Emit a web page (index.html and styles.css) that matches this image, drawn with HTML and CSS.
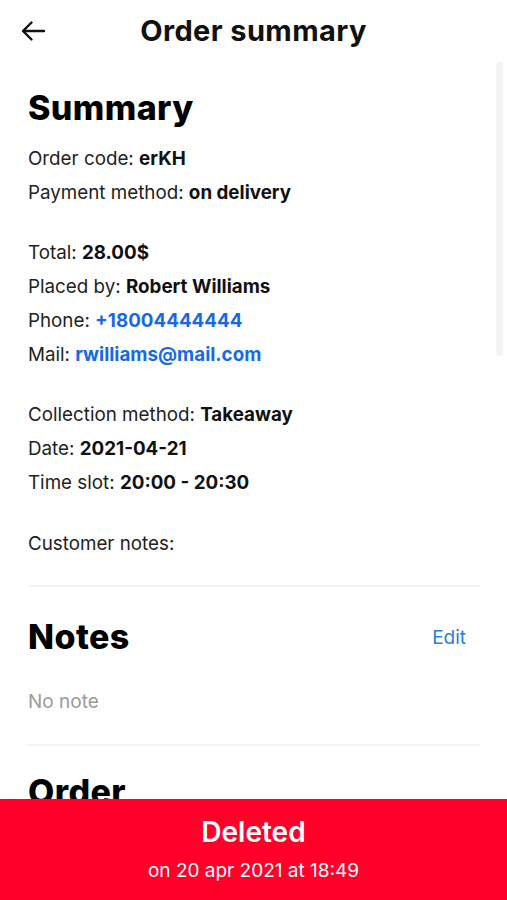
FILE: index.html
```html
<!DOCTYPE html>
<html>
<head>
<meta charset="utf-8">
<link rel="stylesheet" href="styles.css">
</head>
<body>
<div class="screen">
  <header class="topbar">
    <svg class="back" width="26" height="22" viewBox="0 0 26 22"><path d="M24 11H3M11.5 2.5L3 11l8.5 8.5" fill="none" stroke="#111" stroke-width="2.4" stroke-linecap="round" stroke-linejoin="round"/></svg>
    <h1 class="title">Order summary</h1>
  </header>
  <main class="content">
    <section class="section">
      <h2 class="heading">Summary</h2>
      <div class="group">
        <p class="row">Order code: <b>erKH</b></p>
        <p class="row">Payment method: <b>on delivery</b></p>
      </div>
      <div class="group">
        <p class="row">Total: <b>28.00$</b></p>
        <p class="row">Placed by: <b>Robert Williams</b></p>
        <p class="row">Phone: <a class="link">+18004444444</a></p>
        <p class="row">Mail: <a class="link">rwilliams@mail.com</a></p>
      </div>
      <div class="group">
        <p class="row">Collection method: <b>Takeaway</b></p>
        <p class="row">Date: <b>2021-04-21</b></p>
        <p class="row">Time slot: <b>20:00 - 20:30</b></p>
      </div>
      <div class="group last">
        <p class="row">Customer notes:</p>
      </div>
    </section>
    <hr class="divider">
    <section class="section notes">
      <div class="heading-row">
        <h2 class="heading">Notes</h2>
        <a class="edit">Edit</a>
      </div>
      <p class="muted">No note</p>
    </section>
    <hr class="divider">
    <section class="section order">
      <h2 class="heading">Order</h2>
    </section>
  </main>
  <div class="scrollbar"></div>
  <footer class="status">
    <div class="status-title">Deleted</div>
    <div class="status-sub">on 20 apr 2021 at 18:49</div>
  </footer>
</div>
</body>
</html>
```
FILE: styles.css
```css
* { box-sizing: border-box; }
html, body { margin: 0; padding: 0; background: #fff; }
body { font-family: Inter, "Noto Sans", sans-serif; color: #1c1c1c; }
.screen { position: relative; width: 507px; height: 900px; overflow: hidden; background: #fff; }
.topbar { height: 62px; display: flex; align-items: center; position: relative; padding-left: 20px; }
.back { display: block; margin-top: -1px; }
.title { position: absolute; left: 0; right: 0; top: 11px; margin: 0; text-align: center; font-size: 29px; font-weight: 700; letter-spacing: 0.4px; color: #111; line-height: 40px; }
.content { padding: 0 27px 0 28px; }
.heading { margin: 0; font-size: 34px; font-weight: 800; color: #000; line-height: 44px; letter-spacing: 0.4px; }
.section > .heading:first-child { margin-top: 24px; }
.group { margin-top: 26px; }
.group:first-of-type { margin-top: 12px; }
.group.last { margin-top: 27px; }
.row { margin: 0; font-size: 18.8px; line-height: 34px; color: #222; }
.row b { font-weight: 650; color: #111; }
.link { color: #1769e8; font-weight: 650; }
.divider { border: 0; height: 2px; background: #f3f3f3; margin: 24px 0 0; }
.notes { padding-top: 28px; }
.heading-row { display: flex; justify-content: space-between; align-items: center; }
.notes .heading { margin-top: 0; }
.edit { color: #2a7de1; font-size: 19px; margin-right: 14px; }
.muted { margin: 31px 0 0; font-size: 19px; color: #9a9a9a; line-height: 24px; }
.notes + .divider { margin-top: 30px; }
.order .heading { margin-top: 27px; }
.scrollbar { position: absolute; right: 4px; top: 62px; width: 7px; height: 294px; background: #f3f3f3; border-radius: 4px; }
.status { position: absolute; left: 0; right: 0; bottom: 0; height: 101px; background: #ff0029; color: #fff; display: flex; flex-direction: column; align-items: center; padding-top: 15px; }
.status-title { font-size: 28px; font-weight: 600; line-height: 36px; }
.status-sub { font-size: 19px; line-height: 26px; margin-top: 8px; }
```
